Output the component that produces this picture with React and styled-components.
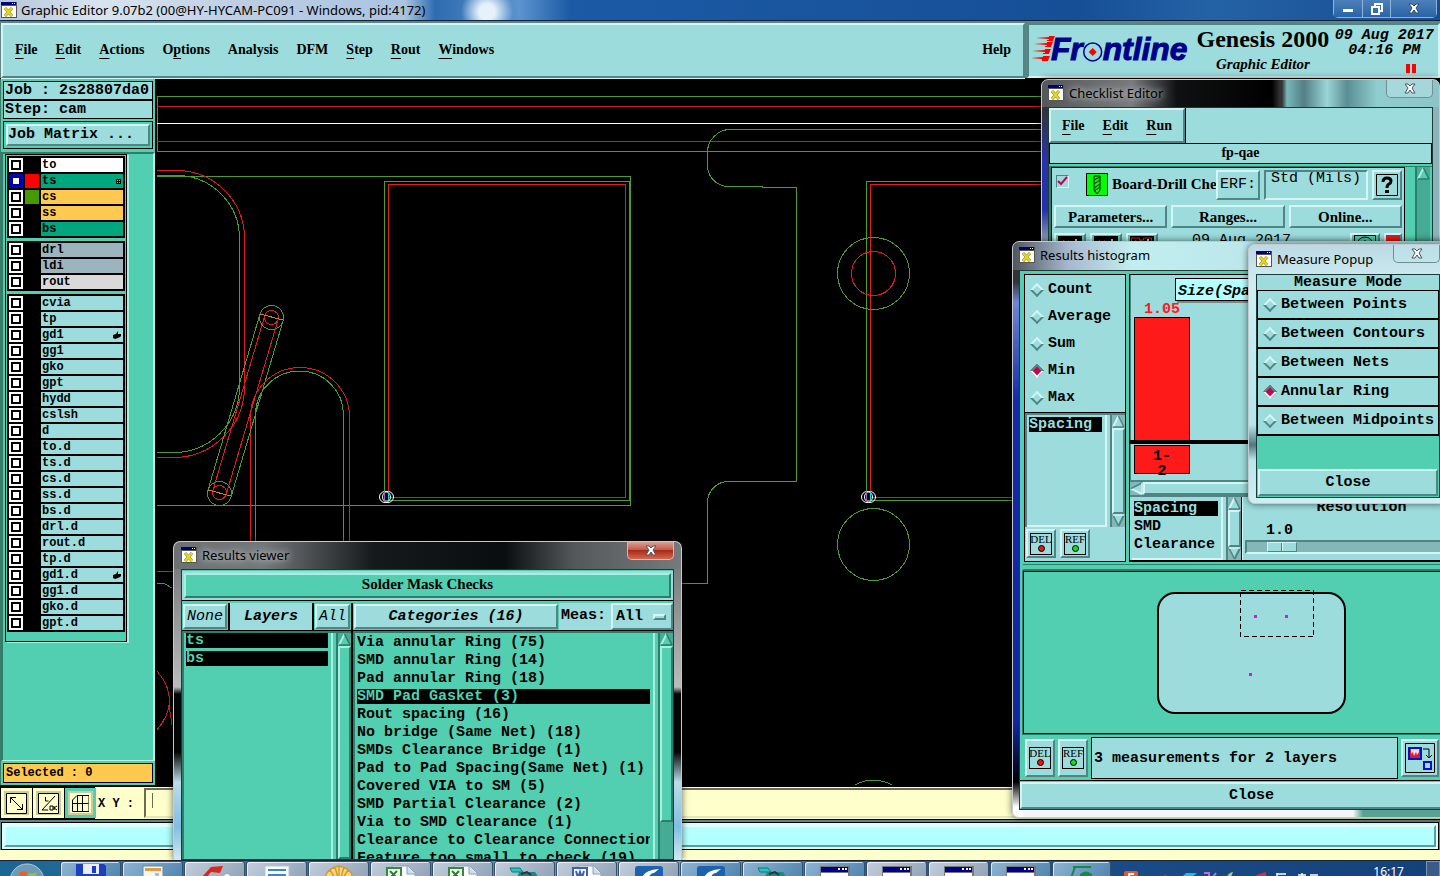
import React from "react";
import styled, { createGlobalStyle, css } from "styled-components";

const GlobalStyle = createGlobalStyle`
  *, *::before, *::after {
    box-sizing: border-box;
  }

  body {
    margin: 0;
    overflow: hidden;
    background: #000;
  }

  button, input, select {
    font: inherit;
    color: inherit;
    margin: 0;
  }

  ul {
    list-style: none;
    margin: 0;
    padding: 0;
  }
`;

const face = "#9cdcdc";
const green = "#52cfb0";
const cream = "#ffffcc";
const ice = "#b4ffff";

const mono = css`
  font-family: "Liberation Mono", monospace;
  font-size: 15px;
  line-height: 18px;
  font-weight: 700;
`;

const serif = css`
  font-family: "Liberation Serif", serif;
  font-size: 15px;
  line-height: 18px;
  font-weight: 700;
`;

const sans = css`
  font-family: "Noto Sans", sans-serif;
  font-size: 13px;
  line-height: 16px;
  font-weight: 400;
`;

const raised = css`
  border: 3px solid;
  border-color: #d4f5f5 #518484 #518484 #d4f5f5;
`;

const raisedGreen = css`
  border: 3px solid;
  border-color: #a8efdf #2c7d6a #2c7d6a #a8efdf;
`;

const Desktop = styled.div`
  position: relative;
  height: 100vh;
  display: flex;
  flex-direction: column;
  overflow: hidden;
  color: #000;
  ${mono}
`;

const TitleBar = styled.header`
  height: 21px;
  flex: none;
  display: flex;
  align-items: center;
  padding-left: 1px;
  gap: 4px;
  border-bottom: 1px solid #10233c;
  background:
    radial-gradient(circle at 487px 12px, #e6f1fb 0 8px, transparent 26px),
    linear-gradient(
      90deg,
      #b5c6da 0,
      #d9e4f0 100px,
      #bccde2 250px,
      #aac4e2 405px,
      #2e6cb0 435px,
      #5b93cf 520px,
      #1c5aa6 570px,
      #164f96 75%,
      #2462a6 84%,
      #174d90 100%
    );
  ${sans}
`;

const TitleText = styled.span`
  flex: 1;
  white-space: nowrap;
`;

const Controls = styled.div`
  display: flex;
  align-self: flex-start;
  margin-right: 3px;
  border: 1px solid #8fb2d8;
  border-top: 0;
  border-radius: 0 0 5px 5px;
`;

const ControlButton = styled.button`
  width: ${(p) => (p.$wide ? 46 : 28)}px;
  height: 17px;
  padding: 0;
  border: 0;
  border-left: ${(p) => (p.$first ? 0 : "1px solid #8fb2d8")};
  background: linear-gradient(#4c80ba, #2a64a6);
  display: flex;
  align-items: center;
  justify-content: center;
`;

const Header = styled.div`
  flex: none;
  display: flex;
  height: 58px;
  gap: 2px;
  padding: 2px 0 0 1px;
  background: #5c8686;
  border-bottom: 1px solid #000;
`;

const MenuBar = styled.nav`
  flex: 1;
  display: flex;
  align-items: center;
  gap: 18px;
  padding: 0 12px 2px 12px;
  background: ${face};
  border: 2px solid;
  border-color: #d4f5f5 #518484 #518484 #d4f5f5;
  box-shadow: 0 1px #d4f5f5;
`;

const MenuButton = styled.button`
  padding: 0;
  border: 0;
  background: none;
  margin-left: ${(p) => (p.$end ? "auto" : 0)};
  ${serif}
  font-size: 14px;

  u {
    text-underline-offset: 4px;
    text-decoration-thickness: 1px;
    text-decoration-skip-ink: none;
  }
`;

const Brand = styled.div`
  flex: none;
  width: 413px;
  display: flex;
  padding: 0 2px 0 2px;
  background: ${face};
  border: 2px solid;
  border-color: #518484 #d4f5f5 #d4f5f5 #518484;
`;

const Product = styled.div`
  width: 140px;
  text-align: center;
  white-space: nowrap;
  font-family: "Liberation Serif", serif;
  font-weight: 700;
`;

const ProductName = styled.div`
  font-size: 24px;
  line-height: 28px;
`;

const ProductPart = styled.div`
  font-size: 15px;
  line-height: 22px;
  font-style: italic;
`;

const Clock = styled.div`
  width: 104px;
  text-align: center;
  font-style: italic;
  line-height: 15px;
  padding-top: 3px;
`;

const PauseMark = styled.div`
  width: 10px;
  height: 9px;
  margin: 6px 20px 0 auto;
  border: solid #f00;
  border-width: 0 4px;
`;

const Workspace = styled.main`
  flex: 1;
  min-height: 0;
  display: flex;
  background: #000;
`;

const Sidebar = styled.aside`
  flex: none;
  width: 155px;
  margin-bottom: 2px;
  display: flex;
  flex-direction: column;
  background: ${green};
  border-left: 1px solid #3c7c6c;
  padding: 2px 2px 2px 2px;
`;

const InfoRow = styled.div`
  height: 19px;
  padding-left: 1px;
  border: 1px solid #000;
  background: ${face};
  overflow: hidden;
  white-space: nowrap;
`;

const MatrixFrame = styled.div`
  margin: 2px 0 3px;
  padding: 2px;
  border: 1px solid #000;
`;

const MatrixButton = styled.button`
  display: block;
  width: 100%;
  height: 22px;
  padding: 0;
  line-height: 16px;
  text-align: left;
  background: ${face};
  ${raised}
  border-width: 2px;
`;

const LayerArea = styled.div`
  flex: 1;
  min-height: 0;
  overflow: hidden;
  margin: 0 -2px 2px -2px;
  border: solid;
  border-width: 2px 2px 1px 2px;
  border-color: #2c7d6a #b5f3e4 #b5f3e4 #2c7d6a;
`;

const LayerFrame = styled.div`
  width: 122px;
  padding: 1px 1px 9px 1px;
  margin-left: 2px;
  display: flex;
  flex-direction: column;
  gap: 3px;
  border: 1px solid #000;
  box-shadow: 2px 1px #a8efdf;
`;

const LayerGroup = styled.ul`
  background: #000;
  padding: 1px 2px;
`;

const LayerRow = styled.li`
  height: 16px;
  display: flex;
  align-items: center;
  gap: 2px;
`;

const LayerTick = styled.input`
  appearance: none;
  flex: none;
  width: 14px;
  height: 14px;
  background: #fff;
  box-shadow:
    inset 0 0 0 2px ${(p) => (p.defaultChecked ? "#0000c8" : "#fff")},
    inset 0 0 0 4px ${(p) => (p.defaultChecked ? "#000090" : "#000")};
`;

const Swatch = styled.span`
  flex: none;
  width: 14px;
  height: 14px;
  background: ${(p) => p.$color || "#000"};
`;

const LayerName = styled.label`
  flex: 1;
  height: 14px;
  display: flex;
  align-items: center;
  justify-content: space-between;
  padding: 0 2px 0 1px;
  font-size: 12px;
  line-height: 14px;
  background: ${(p) => p.$color || face};
`;

const Selected = styled.div`
  height: 20px;
  padding-left: 2px;
  font-size: 12px;
  line-height: 19px;
  border: 1px solid #000;
  background: #ffc84e;
`;

const Canvas = styled.div`
  flex: 1;
  min-width: 0;
  overflow: hidden;
  padding-left: 2px;

  svg {
    display: block;
    width: 100%;
    height: 100%;
    shape-rendering: crispEdges;
  }
`;

const CoordBar = styled.div`
  flex: none;
  height: 33px;
  display: flex;
  padding: 1px 0 1px 1px;
  gap: 1px;
  background: linear-gradient(90deg, #000 0 95px, ${cream} 95px);
  border-bottom: 1px solid #000;
`;

const ToolButton = styled.button`
  width: 31px;
  padding: 0;
  display: flex;
  align-items: center;
  justify-content: center;
  background: ${cream};
  border: 3px solid ${(p) => (p.$on ? green : cream)};
  box-shadow: inset 0 0 0 2px #cccc9f;
`;

const CoordLabel = styled.label`
  padding: 7px 9px 0 1px;
  font-size: 12px;
  background: ${cream};
`;

const CoordInput = styled.input`
  flex: 1;
  min-width: 0;
  border: 2px solid;
  border-color: #6c6c55 ${cream} #e6e6b8 #6c6c55;
  background: linear-gradient(#6c6c55, #6c6c55) 6px 3px / 1px 15px no-repeat ${cream};
`;

const MessageBar = styled.div`
  flex: none;
  height: 30px;
  padding: 2px 1px 0 1px;
  background: #5c8686;
`;

const MessageField = styled.div`
  height: 28px;
  padding: 2px;
  border: 1px solid #000;
  background: #d9ffff;

  div {
    height: 22px;
    border: 2px solid;
    border-color: #e2ffff #5c9c9c #5c9c9c #e2ffff;
    background: ${ice};
  }
`;

const BottomStrip = styled.div`
  flex: none;
  height: 10px;
  background: ${cream};
`;

/* windows floating on the desktop */

const Window = styled.section`
  position: absolute;
  display: flex;
  flex-direction: column;
  padding: 0 7px;
  border: 1px solid #c3cbd0;
  border-radius: 7px 7px 0 0;
  box-shadow: 0 0 7px rgba(0, 0, 0, 0.6);
`;

const ViewerWindow = styled(Window)`
  left: 173px;
  top: 541px;
  bottom: 16px;
  width: 509px;
  border-bottom: 0;
  background:
    linear-gradient(90deg, #6e7173 0, #72777a 90px, #16191c 200px, #0a0d10 330px, #54585b 400px, #777a7c) 0 0 / 100% 27px no-repeat,
    linear-gradient(#6c6f71 0, #bbb 145px, #050505 152px, #050505 210px, #bcdce8 240px, #83bde2 285px, #d3e9f2);
`;

const ChecklistWindow = styled(Window)`
  right: 0;
  top: 79px;
  width: 399px;
  height: 300px;
  padding: 0 6px;
  background:
    linear-gradient(90deg, #55585a 0, #77797a 90px, #101112 135px, #000 230px, transparent 238px) 0 0 / 100% 27px no-repeat,
    linear-gradient(90deg, transparent 240px, #79b6ba 245px, #537f85 262px, #9bd5d6 285px, #5a8f95 305px, #90cdce 335px, #8cc5c8) 0 0 / 100% 27px no-repeat,
    linear-gradient(90deg, transparent 380px, #8cb4ba 385px) 0 0 / 100% 100% no-repeat,
    linear-gradient(#333 27px, #2734a8 80px, #2232aa 130px, #89a 160px);
`;

const HistogramWindow = styled(Window)`
  right: -52px;
  top: 241px;
  bottom: 58px;
  width: 480px;
  padding: 0 7px 7px 6px;
  border-radius: 7px;
  background:
    linear-gradient(90deg, #51565c 0, #a6b8cf 55px, #c3eef0 120px, #acd8df 100%) 0 0 / 100% 28px no-repeat,
    linear-gradient(90deg, transparent 10px, #f3f6f5 10px, #f3f6f5 340px, #58a294 350px) 0 100% / 100% 8px no-repeat,
    linear-gradient(#333 40px, #7184d8 60px, #1528a8 160px, #1325a0 480px, #000 540px, #fff 565px);
`;

const PopupWindow = styled(Window)`
  right: -8px;
  top: 244px;
  width: 200px;
  padding: 0 7px 5px;
  border-radius: 7px;
  background: linear-gradient(#bcd9e4 0, #cfeef3 40px, #b5e5ee 180px, #54777f 200px, #b9e5ed 215px, #cfeef3);
`;

const WindowTitle = styled.div`
  flex: none;
  display: flex;
  gap: 5px;
  height: ${(p) => p.$height || 27}px;
  padding-top: ${(p) => p.$top || 5}px;
  ${sans}
  text-shadow: ${(p) => (p.$glow ? "0 0 6px #d0d4d6, 0 0 10px #b0b4b6" : "none")};

  svg {
    flex: none;
  }
`;

const CloseX = styled.button`
  align-self: flex-start;
  width: 47px;
  height: 18px;
  margin: ${(p) => -(p.$top || 5)}px 0 0 auto;
  padding: 0;
  display: flex;
  align-items: center;
  justify-content: center;
  border: 1px solid ${(p) => (p.$red ? "#f0b0a0" : "#6f8e96")};
  border-top: 0;
  border-radius: 0 0 5px 5px;
  background: ${(p) =>
    p.$red
      ? "linear-gradient(#d9a197, #c85a48 45%, #a82c18 50%, #d4674f)"
      : "rgba(190, 230, 235, 0.5)"};
`;

const Client = styled.div`
  flex: 1;
  min-height: 0;
  display: flex;
  flex-direction: column;
  border: 1px solid #1d3c38;
  background: ${green};
`;

/* results viewer */

const Banner = styled.div`
  flex: none;
  margin: 1px 0 2px;
  padding: 2px;
  background: ${face};
  border-bottom: 1px solid #000;

  h2 {
    margin: 0;
    height: 25px;
    line-height: 19px;
    text-align: center;
    background: ${green};
    ${serif}
    ${raisedGreen}
    border-width: 2px;
  }
`;

const Split = styled.div`
  flex: 1;
  min-height: 0;
  display: flex;
  gap: 2px;
  background: #000;
`;

const Pane = styled.div`
  display: flex;
  flex-direction: column;
  min-width: 0;
  width: ${(p) => (p.$width ? p.$width + "px" : "auto")};
  flex: ${(p) => (p.$width ? "none" : 1)};
  background: ${green};
`;

const PaneHead = styled.div`
  flex: none;
  height: 28px;
  display: flex;
  align-items: stretch;
  background: ${(p) => p.$bg || "#000"};
  gap: 2px;
  border-bottom: 1px solid #000;
`;

const HeadButton = styled.button`
  flex: ${(p) => (p.$grow ? 1 : "none")};
  padding: 0 ${(p) => (p.$grow ? 0 : 2)}px;
  font-style: italic;
  font-weight: ${(p) => (p.$grow ? 700 : 400)};
  background: ${face};
  outline: 1px solid ${green};
  margin: 1px;
  ${raised}
  border-width: 2px;
`;

const HeadLabel = styled.span`
  flex: 1;
  text-align: center;
  line-height: 27px;
  font-style: italic;
  background: ${face};
`;

const MeasLabel = styled.label`
  line-height: 26px;
  padding-right: 3px;
  white-space: nowrap;
`;

const SelectBox = styled.div`
  width: 62px;
  display: flex;
  align-items: center;
  padding-right: 5px;
  background: ${face};
  ${raised}
  border-width: 2px;

  select {
    flex: 1;
    min-width: 0;
    appearance: none;
    padding: 0 0 0 3px;
    border: 0;
    background: none;
  }

  span {
    flex: none;
    width: 13px;
    height: 6px;
    border: 2px solid;
    border-color: #d4f5f5 #518484 #518484 #d4f5f5;
  }
`;

const ListRow = styled.div`
  flex: 1;
  min-height: 0;
  display: flex;
  border: solid #2c7d6a;
  border-width: 2px 0 0 2px;
`;

const List = styled.ul`
  flex: 1;
  min-width: 0;
  overflow: hidden;
  padding: ${(p) => p.$top || 0}px 3px 0 2px;
  border: 0 solid ${(p) => (p.$plain ? "#d4f5f5" : "#a8efdf")};
  border-right-width: 2px;
  border-bottom-width: ${(p) => (p.$plain ? 2 : 0)}px;
`;

const Option = styled.li`
  height: 15px;
  margin-bottom: 3px;
  line-height: 15px;
  overflow: hidden;
  white-space: nowrap;
  background: ${(p) => (p["aria-selected"] ? "#000" : "none")};
  color: ${(p) => (p["aria-selected"] ? p.$ink || green : "#000")};
`;

const Scroll = styled.div`
  flex: none;
  width: 15px;
  margin-left: ${(p) => p.$gap || 3}px;
  display: flex;
  flex-direction: column;
  align-items: center;
  background: ${(p) => (p.$plain ? "#84b8b8" : "#45ab94")};
  border: solid ${(p) => (p.$plain ? "#518484" : "#2c7d6a")};
  border-width: 0 0 0 2px;

  svg {
    flex: none;
    display: block;
  }
`;

const Thumb = styled.div`
  align-self: stretch;
  flex: ${(p) => (p.$length ? "none" : 1)};
  height: ${(p) => (p.$length ? p.$length + "px" : "auto")};
  background: ${(p) => (p.$plain ? face : green)};
  border: 2px solid;
  border-color: ${(p) =>
    p.$plain ? "#d4f5f5 #518484 #518484 #d4f5f5" : "#a8efdf #2c7d6a #2c7d6a #a8efdf"};
`;

/* checklist editor */

const ChecklistMenu = styled.nav`
  flex: none;
  height: 36px;
  display: flex;
  background: ${face};
  border-bottom: 1px solid #000;

  div {
    display: flex;
    gap: 18px;
    padding: 0 11px;
    align-items: center;
    ${raised}
    border-width: 2px;
    box-shadow: 1px 0 #000;
  }
`;

const ChecklistName = styled.div`
  flex: none;
  height: 20px;
  text-align: center;
  background: ${face};
  border: solid #000;
  border-width: 0 1px 1px;
  ${serif}
  font-size: 14px;
`;

const ChecklistBody = styled.div`
  flex: 1;
  min-height: 0;
  display: flex;
  margin-top: 2px;
  padding-right: 2px;
  border: solid #2c7d6a;
  border-width: 1px 0 0 2px;
`;

const CheckItem = styled.div`
  flex: 1;
  min-width: 0;
  padding: 2px 2px;
  display: flex;
  flex-direction: column;
  gap: 5px;
  background: ${face};
  border: 1px solid #000;
`;

const ItemRow = styled.div`
  flex: none;
  display: flex;
  gap: 4px;
  height: ${(p) => p.$height}px;
`;

const Tick = styled.label`
  flex: none;
  width: 13px;
  height: 13px;
  margin: 5px 13px 0 2px;
  display: grid;
  border: 1px solid;
  border-color: #518484 #d4f5f5 #d4f5f5 #518484;

  input, svg {
    grid-area: 1 / 1;
  }

  input {
    appearance: none;
  }
`;

const ItemName = styled.span`
  flex: 1;
  min-width: 0;
  white-space: nowrap;
  line-height: 28px;
  font-size: 15px;
  font-weight: 700;
  font-family: "Liberation Serif", serif;
`;

const DrillIcon = styled.svg`
  flex: none;
  margin-top: 3px;
`;

const SmallButton = styled.button`
  flex: ${(p) => (p.$grow ? 1 : "none")};
  padding: 0 ${(p) => (p.$grow ? 0 : 2)}px;
  font-weight: 400;
  display: flex;
  align-items: center;
  justify-content: center;
  background: ${(p) => p.$bg || face};
  ${raised}
  border-width: 2px;
  ${(p) => p.$grow && serif}
`;

const ErfInput = styled.input`
  width: 104px;
  padding: 0 0 12px 5px;
  font-weight: 400;
  background: ${face};
  border: 2px solid;
  border-color: #518484 #d4f5f5 #d4f5f5 #518484;
`;

const RunDate = styled.span`
  flex: 1;
  padding-left: 30px;
  font-weight: 400;
  line-height: 16px;
`;

/* histogram */

const Upper = styled.div`
  flex: none;
  height: 291px;
  display: flex;
  gap: 3px;
  padding: 3px 3px 0 4px;
`;

const Modes = styled.div`
  flex: none;
  width: 102px;
  display: flex;
  flex-direction: column;
  border: 1px solid #000;
  background: ${face};
`;

const ModeList = styled.fieldset`
  margin: 0;
  padding: 1px 0 1px 5px;
  border: 0;
  border-bottom: 1px solid #000;
`;

const Choice = styled.label`
  height: ${(p) => p.$height || 27}px;
  display: flex;
  align-items: center;
  gap: 6px;
  white-space: nowrap;
`;

const Diamond = styled.input`
  appearance: none;
  flex: none;
  width: 10px;
  height: 10px;
  margin-left: 2px;
  transform: rotate(45deg);
  border: 2px solid;
  border-color: #d4f5f5 #518484 #518484 #d4f5f5;

  &:checked {
    background: #c8004c;
    border-color: #518484 #eefcfc #eefcfc #518484;
  }
`;

const ModeFilter = styled.div`
  flex: 1;
  min-height: 0;
  display: flex;
  border: solid #518484;
  border-width: 2px 0 0 2px;
`;

const ButtonRow = styled.div`
  flex: none;
  display: flex;
  gap: 4px;
  padding: 2px 1px 3px;
`;

const IconButton = styled.button`
  width: ${(p) => p.$width || 30}px;
  height: ${(p) => p.$height || 29}px;
  flex: none;
  padding: 0;
  display: flex;
  align-items: center;
  justify-content: center;
  background: ${face};
  ${raised}
  border-width: 2px;
`;

const ChartSide = styled.div`
  flex: 1;
  min-width: 0;
  display: flex;
  flex-direction: column;
  border: solid #000;
  border-width: 1px 0 2px 1px;
  background: ${face};
`;

const Chart = styled.div`
  height: 205px;
  padding: 3px 0 0 3px;
  display: flex;
  flex-direction: column;
  border-left: 1px solid #518484;
`;

const ChartTitle = styled.div`
  align-self: flex-start;
  margin-left: 41px;
  padding: 5px 20px 0 2px;
  height: 23px;
  line-height: 16px;
  font-size: 15px;
  font-style: italic;
  border: 1px solid #000;
  background: ${ice};
  box-shadow: 2px 2px #7a8a8a;
`;

const BarValue = styled.div`
  width: 56px;
  height: 16px;
  line-height: 18px;
  text-align: center;
  color: #ff1a1a;
`;

const Bar = styled.div`
  width: 56px;
  height: 123px;
  border: 1px solid #000;
  border-bottom: 0;
  background: #ff1a1a;
`;

const Axis = styled.div`
  height: 4px;
  margin-left: -4px;
  background: #000;
`;

const BarRange = styled.div`
  width: 56px;
  height: 29px;
  margin-top: 1px;
  padding-top: 3px;
  line-height: 15px;
  text-align: center;
  border: 1px solid #000;
  background: #ff1a1a;
`;

const HScroll = styled.div`
  height: 15px;
  display: flex;
  align-items: center;
  background: #84b8b8;
  border-top: 2px solid #518484;

  div {
    flex: 1;
    height: 13px;
    background: ${face};
    border: 2px solid;
    border-color: #d4f5f5 #518484 #518484 #d4f5f5;
  }
`;

const Filters = styled.div`
  flex: 1;
  min-height: 0;
  display: flex;
  border-top: 2px solid #518484;
`;

const FilterList = styled.div`
  width: 112px;
  flex: none;
  display: flex;
  padding-left: 2px;
  border-right: 1px solid #000;
`;

const Resolution = styled.div`
  flex: 1;
  border-left: 1px solid #d4f5f5;
`;

const ResTitle = styled.label`
  display: block;
  text-align: center;
  line-height: 22px;
`;

const ResValue = styled.div`
  padding-left: 23px;
  height: 21px;
  line-height: 24px;
`;

const Range = styled.input`
  appearance: none;
  display: block;
  width: calc(100% - 4px);
  height: 14px;
  margin: 0 2px;
  background: #84b8b8;
  border: 2px solid;
  border-color: #518484 #d4f5f5 #d4f5f5 #518484;

  &::-webkit-slider-thumb {
    appearance: none;
    width: 30px;
    height: 10px;
    border: 1px solid;
    border-color: #d4f5f5 #518484 #518484 #d4f5f5;
    background: linear-gradient(90deg, ${face} 13px, #518484 13px 14px, #d4f5f5 14px 15px, ${face} 15px);
  }
`;

const MapPanel = styled.div`
  flex: 1;
  min-height: 0;
  margin: 9px 4px 2px 3px;
  display: flex;
  justify-content: center;
  align-items: center;
  background: ${green};
  border: 1px solid #000;
  outline: 1px solid #2c7d6a;
  box-shadow: 0 -2px #2c7d6a, 0 -6px ${green}, 0 -7px #2c7d6a;

  svg {
    display: block;
  }
`;

const ResultRow = styled.div`
  flex: none;
  height: 45px;
  display: flex;
  align-items: center;
  gap: 3px;
  padding: 0 3px 0 5px;
  border-bottom: 1px solid #000;
`;

const ResultText = styled.output`
  flex: 1;
  height: 42px;
  padding-left: 2px;
  line-height: 42px;
  border: 1px solid #000;
  background: ${face};
`;

const CloseButton = styled.button`
  flex: none;
  height: 27px;
  margin: ${(p) => p.$margin || "0"};
  padding: 0;
  background: ${face};
  ${raised}
  border-width: 2px;
`;

/* measure popup */

const MeasureHead = styled.div`
  height: 16px;
  line-height: 16px;
  text-align: center;
  background: ${face};
  border-bottom: 1px solid #000;
`;

const MeasureModes = styled.fieldset`
  margin: 0 0 33px;
  padding: 0;
  border: 0;

  label {
    padding-left: 5px;
    background: ${face};
    border: solid #000;
    border-width: 0 1px 2px;
  }
`;

/* taskbar */

const Taskbar = styled.footer`
  position: relative;
  z-index: 5;
  flex: none;
  height: 16px;
  display: flex;
  align-items: flex-start;
  overflow: hidden;
  border-top: 1px solid #16233a;
  background: linear-gradient(90deg, #1c6593, #2e7ba6 25%, #8ba2b8 45%, #2d5d8f 60%, #1b4c87 75%, #154179);
`;

const Start = styled.button`
  width: 60px;
  flex: none;
  padding: 0 0 0 8px;
  border: 0;
  background: none;

  svg {
    display: block;
  }
`;

const Task = styled.button`
  flex: none;
  width: ${(p) => (p.$last ? 59 : 61)}px;
  height: 38px;
  margin-right: 1px;
  padding: 0;
  display: flex;
  justify-content: center;
  border: 1px solid #32506e;
  border-radius: 3px;
  box-shadow: inset 1px 1px rgba(255, 255, 255, 0.7);
  background: ${(p) => p.$tint};
`;

const Tray = styled.div`
  flex: 1;
  display: flex;
  align-items: flex-start;
  justify-content: space-between;
  padding: 0 0 0 12px;
  color: #fff;
  ${sans}
`;

const TrayClock = styled.time`
  padding: 3px 22px 0 0;
  margin-left: auto;
  font-size: 12px;
`;

const ShowDesktop = styled.button`
  width: 14px;
  height: 38px;
  padding: 0;
  border: 1px solid #7b94b4;
  background: #3a5c86;
`;

const surface = [
  ["to", "#ffffff"],
  ["ts", "#00a67e", "#ff0000"],
  ["cs", "#ffc84e", "#459a00"],
  ["ss", "#ffc84e"],
  ["bs", "#00a67e"],
];

const drills = [
  ["drl", "#9cb4bd"],
  ["ldi", "#9cb4bd"],
  ["rout", "#d9d9d9"],
];

const misc = [
  "cvia", "tp", "gd1", "gg1", "gko", "gpt", "hydd", "cslsh", "d", "to.d", "ts.d",
  "cs.d", "ss.d", "bs.d", "drl.d", "rout.d", "tp.d", "gd1.d", "gg1.d", "gko.d", "gpt.d",
].map((name) => [name]);

const categories = [
  "Via annular Ring (75)",
  "SMD annular Ring (14)",
  "Pad annular Ring (18)",
  "SMD Pad Gasket (3)",
  "Rout spacing (16)",
  "No bridge (Same Net) (18)",
  "SMDs Clearance Bridge (1)",
  "Pad to Pad Spacing(Same Net) (1)",
  "Covered VIA to SM (5)",
  "SMD Partial Clearance (2)",
  "Via to SMD Clearance (1)",
  "Clearance to Clearance Connection",
  "Feature too small to check (19)",
];

const measureModes = [
  "Between Points",
  "Between Contours",
  "Between Nets",
  "Annular Ring",
  "Between Midpoints",
];

const glass = "linear-gradient(135deg, #c3cedb, #8397ae)";
const blueGlass = "linear-gradient(135deg, #8fb5d3, #3d77a6)";
const tasks = [
  ["floppy", blueGlass],
  ["calc", blueGlass],
  ["acrobat", glass],
  ["note", glass],
  ["shell", glass],
  ["excel", glass],
  ["excel", glass],
  ["camtool", glass],
  ["word", glass],
  ["blue", glass],
  ["blue", blueGlass],
  ["camtool", blueGlass],
  ["xwin", blueGlass],
  ["xwin", glass],
  ["xwin", glass],
  ["xwin", blueGlass],
  ["green", blueGlass],
];

function AppIcon() {
  return (
    <svg width="16" height="16" viewBox="0 0 16 16" shapeRendering="crispEdges">
      <path d="M0 0h16v16H0z" fill="#555" />
      <path d="M1 4h14v11H1z" fill="#fff" />
      <path d="M0 0h15v3H0z" fill="#000080" />
      <path d="M11 1h1v1h-1zM13 1h1v1h-1z" fill="#fff" />
      <path
        d="M4 6l7 8M11 6l-7 8"
        fill="none"
        stroke="#8c8420"
        strokeWidth="3"
        shapeRendering="auto"
      />
      <path d="M4 6l7 8M11 6l-7 8" fill="none" stroke="#e4d820" strokeWidth="2" shapeRendering="auto" />
    </svg>
  );
}

function Cross({ light }) {
  return (
    <svg width="12" height="11" viewBox="0 0 12 11">
      <path
        d="M1 1h3l2 2 2-2h3L8 5l3 5H8L6 7l-2 3H1l3-5z"
        fill="#fff"
        stroke={light ? "#34495e" : "#4b565c"}
        strokeWidth="1"
      />
    </svg>
  );
}

function Arrow({ dir, plain }) {
  const light = plain ? "#d4f5f5" : "#a8efdf";
  const dark = plain ? "#518484" : "#2c7d6a";
  const turn = { up: 0, down: 180, left: -90 }[dir];
  return (
    <svg width="13" height="13" viewBox="0 0 13 13">
      <g transform={`rotate(${turn} 6.5 6.5)`}>
        <path d="M6.5 1L12 12H1z" fill={plain ? face : green} />
        <path d="M6.5 1L1 12" stroke={dir === "down" ? dark : light} strokeWidth="2" fill="none" />
        <path d="M6.5 1L12 12" stroke={dark} strokeWidth="1.5" fill="none" />
        <path d="M1 12h11" stroke={dir === "up" ? dark : light} strokeWidth="1.5" />
      </g>
    </svg>
  );
}

function DelRef({ label, dot }) {
  return (
    <svg width="24" height="24" viewBox="0 0 24 24">
      <rect x="1.5" y="1.5" width="21" height="21" fill="none" stroke="#000" />
      <text x="12" y="11" textAnchor="middle" fontFamily="Liberation Serif, serif" fontSize="11" fontWeight="400">
        {label}
      </text>
      <circle cx="12.5" cy="16.5" r="3" fill={dot} stroke="#000" />
    </svg>
  );
}

function FrontlineLogo() {
  return (
    <svg width="163" height="40" viewBox="0 0 163 40">
      <g fill="#f00">
        <path d="M5 13l13-1v-1h6l-2 5h-6v-1h2v-1z" />
        <path d="M3 19l13-1v-1h6l-2 5h-6v-1h2v-1z" />
        <path d="M1 26l13-1v-1h6l-2 5h-6v-1h2v-1z" />
        <path d="M0 33l12-1v-1h7l-2 5h-6v-2z" />
      </g>
      <g
        fill="#00008b"
        fontFamily="Liberation Sans, sans-serif"
        fontSize="32"
        fontWeight="700"
        fontStyle="italic"
        stroke="#00008b"
        strokeWidth="1"
      >
        <text x="20" y="35">Fr</text>
        <text x="72" y="35">ntline</text>
      </g>
      <circle cx="62" cy="27" r="9" fill={face} stroke="#00008b" strokeWidth="1.5" />
      <path d="M62 23l4 4-4 4-4-4z" fill="#f00" />
    </svg>
  );
}

function Hand() {
  return (
    <svg width="9" height="8" viewBox="0 0 9 8">
      <path d="M1 4l3-1 2-3v3h3v2l-1 1-2 1-3 1-2-1z" />
    </svg>
  );
}

function GridMark() {
  return (
    <svg width="5" height="5" viewBox="0 0 5 5" shapeRendering="crispEdges">
      <path d="M0 0h5v5H0z" />
      <path d="M1 1h1v1H1zM3 1h1v1H3zM1 3h1v1H1zM3 3h1v1H3z" fill={green} />
    </svg>
  );
}

function Layers({ rows }) {
  return (
    <LayerGroup>
      {rows.map(([name, color, swatch]) => (
        <LayerRow key={name}>
          <LayerTick type="checkbox" id={`layer-${name}`} defaultChecked={name === "ts"} />
          <Swatch $color={swatch} />
          <LayerName htmlFor={`layer-${name}`} $color={color}>
            {name}
            {name === "ts" && <GridMark />}
            {name.startsWith("gd1") && <Hand />}
          </LayerName>
        </LayerRow>
      ))}
    </LayerGroup>
  );
}

function Board() {
  return (
    <svg>
      <g transform="translate(-157 -79)" fill="none" stroke="#4f9a32">
        <path d="M1440 96.5H157.5V151.5H1440" />
        <path d="M157 106.5H1440M157 141.5H1440" stroke="#c81e1e" />
        <path d="M157 123.5H1440" stroke="#fff" />
        <path d="M1440 129.5H730A23 23 0 0 0 707.5 152V166A21 21 0 0 0 728 186.5H762V187.5H796.5V481.5H728A21 21 0 0 0 707.5 502V583.5H600" />
        <path d="M157 176.5H630.5V505.5H157" />
        <path d="M384.5 181.5H629.5V500.5H384.5z" />
        <path d="M1440 181.5H866.5V500.5H1440" />
        <circle cx="873.5" cy="273.5" r="36" />
        <circle cx="873.5" cy="544.5" r="36" />
        <path d="M855 785Q873 775 892 785" />
        <path d="M157 175.5H177A63 63 0 0 1 239.5 239V389A66 66 0 0 1 172 452.5H157" />
        <path d="M255.5 545V415A44 44 0 0 1 343.5 415V545" />
        <path d="M157 583.5H164L172 588" />
        <g stroke="#dc1e1e">
          <path d="M388.5 184.5H625.5V497.5H388.5z" />
          <path d="M1440 184.5H870.5V497.5H1440" />
          <circle cx="873.5" cy="273.5" r="22" />
          <path d="M157 170.5H178A68 68 0 0 1 244.5 240V389A71 71 0 0 1 172 457.5H157" />
          <path d="M250.5 545V417A49.5 49.5 0 0 1 349.5 417V545" />
          <path d="M157 571.5H180M157 671Q182 700 157 730M169 705L172 725" />
        </g>
        <g>
          <circle cx="271.5" cy="317.5" r="12" />
          <circle cx="219.5" cy="493.5" r="12" />
          <path d="M260 314L208 490M283 321L231 497" />
        </g>
        <g stroke="#e02020">
          <circle cx="271.5" cy="317.5" r="7" />
          <circle cx="219.5" cy="492.5" r="7" />
          <path d="M265 315L213 490M278 320L226 495" />
        </g>
        <path d="M260 314L283 320M208 490L231 496" stroke="#c08a20" />
        {[386.5, 868.5].map((x) => (
          <g key={x} stroke="#fff" shapeRendering="auto">
            <circle cx={x - 1.5} cy="497" r="5.5" />
            <circle cx={x + 1.5} cy="497" r="5.5" />
            <path d={`M${x - 2} 491V502`} stroke="#9a60d0" />
            <path d={`M${x + 2} 491V500`} stroke="#20d0e0" />
          </g>
        ))}
      </g>
    </svg>
  );
}

function TaskIcon({ kind }) {
  return (
    <svg width="32" height="16" viewBox="0 0 32 16">
      {kind === "floppy" && (
        <>
          <path d="M1 2h28l2 2v12H1z" fill="#1c3fc0" />
          <path d="M8 2h16v10H8z" fill="#e8eefc" />
          <path d="M17 4h4v7h-4z" fill="#1c3fc0" />
        </>
      )}
      {kind === "calc" && (
        <>
          <path d="M6 4h20v12H6z" fill="#f4f7fa" stroke="#5f88ad" />
          <path d="M8 6h16v3H8z" fill="#e59a3c" />
          <path d="M18 11h4v5h-4z" fill="#9dbfe0" />
        </>
      )}
      {kind === "acrobat" && (
        <>
          <path d="M3 15L12 5l12-1-3 7-9-1-5 6z" fill="#d6281c" />
          <circle cx="28" cy="15" r="3" fill="#f2f4f7" />
        </>
      )}
      {kind === "note" && (
        <>
          <path d="M4 4h24v12H4z" fill="#fafcff" stroke="#b5c4d4" />
          <path d="M7 8h18M7 13h18" stroke="#3c87bb" strokeWidth="2" />
        </>
      )}
      {kind === "shell" && (
        <path
          d="M2 16Q4 6 16 4Q28 6 30 16M7 8l5 8M12 5l3 11M16 4v12M21 5l-3 11M25 8l-5 8"
          fill="#f8d878"
          stroke="#d09a34"
          strokeWidth="1.5"
        />
      )}
      {(kind === "excel" || kind === "word") && (
        <>
          <path d="M7 4h16l7 7v5H7z" fill="#f8fafc" stroke="#8fa2b8" />
          <path d="M22 4v8h8" fill="#cfdcea" stroke="#8fa2b8" />
          <path d="M2 6h14v10H2z" fill="#f5faf5" stroke={kind === "excel" ? "#348a3c" : "#3c5fae"} strokeWidth="2" />
          <path
            d={kind === "excel" ? "M5 9l7 7M12 9l-7 7" : "M5 9l2 7 2-6 2 6 2-7"}
            stroke={kind === "excel" ? "#2a7d34" : "#3c5fae"}
            strokeWidth="2"
            fill="none"
          />
        </>
      )}
      {kind === "camtool" && (
        <>
          <path d="M1 6h10l3 4H3z" fill="#20c8c0" stroke="#107870" />
          <path d="M10 10h16l4 6H8z" fill="#188a86" />
          <path d="M12 12l6-2 4 3" stroke="#333" strokeWidth="2" fill="none" />
        </>
      )}
      {kind === "blue" && (
        <>
          <rect x="2" y="4" width="28" height="20" rx="3" fill="#1c62ae" />
          <path d="M9 16q2-8 17-9l-5 4q-4 0-5 5z" fill="#fff" />
        </>
      )}
      {kind === "xwin" && (
        <>
          <path d="M1 4h30v12H1z" fill="#777" />
          <path d="M2 5h27v5H2z" fill="#000090" />
          <path d="M2 11h27v5H2z" fill="#fff" />
          <path d="M19 6h2v2h-2zM23 6h2v2h-2zM26 6h2v2h-2z" fill="#fff" />
        </>
      )}
      {kind === "green" && (
        <>
          <path d="M7 5h18M9 5L5 16" stroke="#148a48" strokeWidth="2" fill="none" />
          <path d="M14 12q6-5 12 0v4H14z" fill="#148a48" />
        </>
      )}
    </svg>
  );
}

function MainWindow() {
  return (
    <>
      <TitleBar>
        <AppIcon />
        <TitleText>Graphic Editor 9.07b2 (00@HY-HYCAM-PC091 - Windows, pid:4172)</TitleText>
        <Controls>
          <ControlButton $first aria-label="Minimize">
            <svg width="12" height="10">
              <path d="M1 5h10v3H1z" fill="#fff" />
            </svg>
          </ControlButton>
          <ControlButton aria-label="Restore">
            <svg width="12" height="12" fill="none" stroke="#fff" strokeWidth="2">
              <path d="M4 3V1h7v7H9M1 4h7v7H1z" />
            </svg>
          </ControlButton>
          <ControlButton $wide aria-label="Close">
            <Cross light />
          </ControlButton>
        </Controls>
      </TitleBar>

      <Header>
        <MenuBar>
          <MenuButton><u>F</u>ile</MenuButton>
          <MenuButton><u>E</u>dit</MenuButton>
          <MenuButton><u>A</u>ctions</MenuButton>
          <MenuButton>O<u>p</u>tions</MenuButton>
          <MenuButton>Analysis</MenuButton>
          <MenuButton>DFM</MenuButton>
          <MenuButton><u>S</u>tep</MenuButton>
          <MenuButton><u>R</u>out</MenuButton>
          <MenuButton><u>W</u>indows</MenuButton>
          <MenuButton $end>Help</MenuButton>
        </MenuBar>
        <Brand>
          <FrontlineLogo />
          <Product>
            <ProductName>Genesis 2000</ProductName>
            <ProductPart>Graphic Editor</ProductPart>
          </Product>
          <Clock>
            09 Aug 2017
            <br />
            04:16 PM
            <PauseMark />
          </Clock>
        </Brand>
      </Header>

      <Workspace>
        <Sidebar>
          <InfoRow>Job : 2s28807da0</InfoRow>
          <InfoRow>Step: cam</InfoRow>
          <MatrixFrame>
            <MatrixButton>Job Matrix ...</MatrixButton>
          </MatrixFrame>
          <LayerArea>
            <LayerFrame>
              <Layers rows={surface} />
              <Layers rows={drills} />
              <Layers rows={misc} />
            </LayerFrame>
          </LayerArea>
          <Selected>Selected : 0</Selected>
        </Sidebar>
        <Canvas>
          <Board />
        </Canvas>
      </Workspace>

      <CoordBar>
        <ToolButton aria-label="Pan">
          <svg width="21" height="21" fill="none" stroke="#000">
            <path d="M.5 .5h20v20H.5zM4.5 10V4.5H10M4.5 4.5l12 12M16.5 11v5.5H11" />
          </svg>
        </ToolButton>
        <ToolButton aria-label="Angle">
          <svg width="21" height="21" fill="none" stroke="#000">
            <path d="M.5 .5h20v20H.5zM17 3L4 17h6M7.5 4v4h3M12 13h3v4h-3zM16 13v4M19 13l-3 2 3 2" />
          </svg>
        </ToolButton>
        <ToolButton $on aria-label="Grid">
          <svg width="17" height="17" fill="none" stroke="#000">
            <path d="M.5 5l4.500-4.500h12v16H.5zM5.500 .5v16M.5 8.500h16M10.500 .5v16" />
          </svg>
        </ToolButton>
        <CoordLabel htmlFor="xy">X Y :</CoordLabel>
        <CoordInput id="xy" />
      </CoordBar>
      <MessageBar>
        <MessageField>
          <div />
        </MessageField>
      </MessageBar>
      <BottomStrip />
    </>
  );
}

function ResultsViewer() {
  return (
    <ViewerWindow>
      <WindowTitle $glow>
        <AppIcon />
        Results viewer
        <CloseX $red aria-label="Close">
          <Cross />
        </CloseX>
      </WindowTitle>
      <Client>
        <Banner>
          <h2>Solder Mask Checks</h2>
        </Banner>
        <Split>
          <Pane $width={169}>
            <PaneHead>
              <HeadButton>None</HeadButton>
              <HeadLabel>Layers</HeadLabel>
              <HeadButton>All</HeadButton>
            </PaneHead>
            <ListRow>
              <List role="listbox" aria-label="Layers">
                <Option role="option" aria-selected>ts</Option>
                <Option role="option" aria-selected>bs</Option>
              </List>
              <Scroll>
                <Arrow dir="up" />
                <Thumb />
              </Scroll>
            </ListRow>
          </Pane>
          <Pane>
            <PaneHead $bg={face}>
              <HeadButton $grow>Categories (16)</HeadButton>
              <MeasLabel htmlFor="meas">Meas:</MeasLabel>
              <SelectBox>
                <select id="meas">
                  <option>All</option>
                </select>
                <span />
              </SelectBox>
            </PaneHead>
            <ListRow>
              <List $top={2} role="listbox" aria-label="Categories">
                {categories.map((name, i) => (
                  <Option key={name} role="option" aria-selected={i === 3}>
                    {name}
                  </Option>
                ))}
              </List>
              <Scroll>
                <Arrow dir="up" />
                <Thumb $length={176} />
              </Scroll>
            </ListRow>
          </Pane>
        </Split>
      </Client>
    </ViewerWindow>
  );
}

function ChecklistEditor() {
  return (
    <ChecklistWindow>
      <WindowTitle $glow>
        <AppIcon />
        Checklist Editor
        <CloseX aria-label="Close">
          <Cross />
        </CloseX>
      </WindowTitle>
      <Client>
        <ChecklistMenu>
          <div>
            <MenuButton><u>F</u>ile</MenuButton>
            <MenuButton><u>E</u>dit</MenuButton>
            <MenuButton><u>R</u>un</MenuButton>
          </div>
        </ChecklistMenu>
        <ChecklistName>fp-qae</ChecklistName>
        <ChecklistBody>
          <CheckItem>
            <ItemRow $height={30}>
              <Tick>
                <input type="checkbox" defaultChecked aria-label="Board-Drill Checks" />
                <svg width="11" height="11">
                  <path d="M1 5l3 3 6-7" fill="none" stroke="#c8005a" strokeWidth="2" />
                </svg>
              </Tick>
              <DrillIcon width="22" height="23" viewBox="0 0 22 23">
                <path d="M.5 .5h21v22H.5z" fill="#00ff00" stroke="#000" />
                <path d="M8 3h6v14l-3 4-3-4zM8 7l6-3M8 11l6-4M8 15l6-4M8 18l6-4" fill="none" stroke="#000" />
              </DrillIcon>
              <ItemName>Board-Drill Che</ItemName>
              <SmallButton>ERF:</SmallButton>
              <ErfInput aria-label="ERF" defaultValue="Std (Mils)" />
              <SmallButton aria-label="Help">
                <svg width="22" height="22" viewBox="0 0 22 22">
                  <path d="M.5 .5h21v21H.5z" fill="none" stroke="#000" />
                  <path d="M7 8q0-4 4-4t4 3q0 2-2 3t-2 4" fill="none" stroke="#000" strokeWidth="3" />
                  <path d="M9 16h4v3H9z" />
                </svg>
              </SmallButton>
            </ItemRow>
            <ItemRow $height={23}>
              <SmallButton $grow>Parameters...</SmallButton>
              <SmallButton $grow>Ranges...</SmallButton>
              <SmallButton $grow>Online...</SmallButton>
            </ItemRow>
            <ItemRow $height={24}>
              {[face, face, "#e02020"].map((edge, i) => (
                <SmallButton key={i} $bg={green} aria-label={`Run mode ${i + 1}`}>
                  <svg width="24" height="22" viewBox="0 0 24 22">
                    <path d="M0 2h24v20H0z" fill="#000" />
                    {i === 2 && <path d="M1.5 20V4h8v2h4V4h8v16" fill="none" stroke={edge} />}
                    <path d="M5 7l3 3M10 7l2 3M18 5v5M16 8h5" stroke={face} strokeWidth="2" />
                  </svg>
                </SmallButton>
              ))}
              <RunDate>09 Aug 2017</RunDate>
              <SmallButton $bg={green} aria-label="History">
                <svg width="22" height="20" fill="none" stroke="#000">
                  <path d="M.5 .5h21v19H.5z" />
                  <circle cx="11" cy="10" r="8" />
                  <path d="M11 5v5h4" />
                </svg>
              </SmallButton>
              <SmallButton $bg="#f01818" aria-label="Status">
                <svg width="10" height="20">
                  <path d="M2 8h2v3H2zM6 8h2v3H6z" fill="#801010" />
                </svg>
              </SmallButton>
            </ItemRow>
          </CheckItem>
          <Scroll $gap={10}>
            <Arrow dir="up" />
          </Scroll>
        </ChecklistBody>
      </Client>
    </ChecklistWindow>
  );
}

function ResultsHistogram() {
  return (
    <HistogramWindow>
      <WindowTitle $height={28}>
        <AppIcon />
        Results histogram
      </WindowTitle>
      <Client>
        <Upper>
          <Modes>
            <ModeList>
              {["Count", "Average", "Sum", "Min", "Max"].map((name) => (
                <Choice key={name}>
                  <Diamond type="radio" name="mode" defaultChecked={name === "Min"} />
                  {name}
                </Choice>
              ))}
            </ModeList>
            <ModeFilter>
              <List $plain $top={2} role="listbox" aria-label="Measurement">
                <Option role="option" aria-selected $ink={face}>Spacing</Option>
              </List>
              <Scroll $plain>
                <Arrow dir="up" plain />
                <Thumb $plain />
                <Arrow dir="down" plain />
              </Scroll>
            </ModeFilter>
            <ButtonRow>
              <IconButton>
                <DelRef label="DEL" dot="#f01010" />
              </IconButton>
              <IconButton>
                <DelRef label="REF" dot="#10e010" />
              </IconButton>
            </ButtonRow>
          </Modes>
          <ChartSide>
            <Chart>
              <ChartTitle>Size(Spacing)</ChartTitle>
              <BarValue>1.05</BarValue>
              <Bar />
              <Axis />
              <BarRange>
                1-
                <br />2
              </BarRange>
            </Chart>
            <HScroll>
              <Arrow dir="left" plain />
              <div />
            </HScroll>
            <Filters>
              <FilterList>
                <List $plain $top={4} role="listbox" aria-label="Histogram type">
                  <Option role="option" aria-selected $ink={face}>Spacing</Option>
                  <Option role="option">SMD</Option>
                  <Option role="option">Clearance</Option>
                </List>
                <Scroll $plain>
                  <Arrow dir="up" plain />
                  <Thumb $plain />
                  <Arrow dir="down" plain />
                </Scroll>
              </FilterList>
              <Resolution>
                <ResTitle htmlFor="res">Resolution</ResTitle>
                <ResValue>1.0</ResValue>
                <Range id="res" type="range" min="0" max="10" step="1" defaultValue="1" />
              </Resolution>
            </Filters>
          </ChartSide>
        </Upper>
        <MapPanel>
          <svg width="192" height="128" viewBox="0 0 192 128">
            <rect x="3" y="4" width="187" height="120" rx="17" fill={face} stroke="#000" strokeWidth="2" />
            <path d="M85.5 1.5h73v46h-73z" fill="none" stroke="#000" strokeDasharray="5 3" shapeRendering="crispEdges" />
            <path d="M99 26h3v3h-3zM130 26h3v3h-3zM94 84h3v3h-3z" fill="#d818d8" />
          </svg>
        </MapPanel>
        <ResultRow>
          <IconButton $height={38}>
            <DelRef label="DEL" dot="#f01010" />
          </IconButton>
          <IconButton $height={38}>
            <DelRef label="REF" dot="#10e010" />
          </IconButton>
          <ResultText>3 measurements for 2 layers</ResultText>
          <IconButton $width={38} $height={38} aria-label="Copy results">
            <svg width="30" height="30" fill="none">
              <path d="M.5 .5h29v29H.5z" stroke="#000" />
              <path d="M4 5h12v11H4z" fill="#e01830" stroke="#0010d0" strokeWidth="2" />
              <path d="M6 6h8v3l-2 3-1-3-2 4-1-4-2 2z" fill="#f0dce8" />
              <path d="M18 6h6v8M21 12l3 3 3-3" stroke="#000" />
              <path d="M19 19h7v7h-7z" stroke="#0010d0" strokeWidth="2" />
            </svg>
          </IconButton>
          <IconButton $width={38} $height={38} aria-label="Options" />
        </ResultRow>
        <CloseButton $margin="1px 0 0">Close</CloseButton>
      </Client>
    </HistogramWindow>
  );
}

function MeasurePopup() {
  return (
    <PopupWindow>
      <WindowTitle $height={29} $top={6}>
        <AppIcon />
        Measure Popup
        <CloseX $top={6} aria-label="Close">
          <Cross />
        </CloseX>
      </WindowTitle>
      <Client>
        <MeasureHead>Measure Mode</MeasureHead>
        <MeasureModes>
          {measureModes.map((name) => (
            <Choice key={name} $height={29}>
              <Diamond type="radio" name="measure" defaultChecked={name === "Annular Ring"} />
              {name}
            </Choice>
          ))}
        </MeasureModes>
        <CloseButton $margin="0 1px 1px">Close</CloseButton>
      </Client>
    </PopupWindow>
  );
}

function App() {
  return (
    <>
      <GlobalStyle />
      <Desktop>
        <MainWindow />
        <ResultsViewer />
        <ChecklistEditor />
        <ResultsHistogram />
        <MeasurePopup />
        <Taskbar>
          <Start aria-label="Start">
            <svg width="38" height="16" viewBox="0 0 38 16">
              <circle cx="19" cy="20" r="17" fill="#6f9ab5" stroke="#b5cbd8" />
              <path d="M11 12q4-3 8-1l-1 6h-8z" fill="#e8602c" />
              <path d="M21 12q4 2 8-1l-2 6h-7z" fill="#8cc63c" />
            </svg>
          </Start>
          {tasks.map(([kind, tint], i) => (
            <Task key={i} $tint={tint} $last={i === tasks.length - 1} aria-label={kind}>
              <TaskIcon kind={kind} />
            </Task>
          ))}
          <Tray>
            <svg width="200" height="16" viewBox="0 0 200 16">
              <rect y="10" width="14" height="14" rx="2" fill="#e8552c" />
              <path d="M10 13H5v3" stroke="#fff" strokeWidth="2" fill="none" />
              <path d="M38 16l4-3 1 3z" fill="#c03030" />
              <path d="M58 16l4-4h11l-5 4z" fill="#20b8f0" />
              <path d="M80 12h5v4M92 12l-3 4" stroke="#c070d0" strokeWidth="2" fill="none" />
              <path d="M103 16q1-4 6-5l-2 5z" fill="#b8c878" />
              <path d="M132 14l10-3v5h-8z" fill="#d83030" />
              <path d="M153 12v4M153 13h9M178 12v4M174 14h8M186 14h8" stroke="#fff" strokeWidth="1.5" />
            </svg>
            <TrayClock>16:17</TrayClock>
            <ShowDesktop aria-label="Show desktop" />
          </Tray>
        </Taskbar>
      </Desktop>
    </>
  );
}

export default App;
